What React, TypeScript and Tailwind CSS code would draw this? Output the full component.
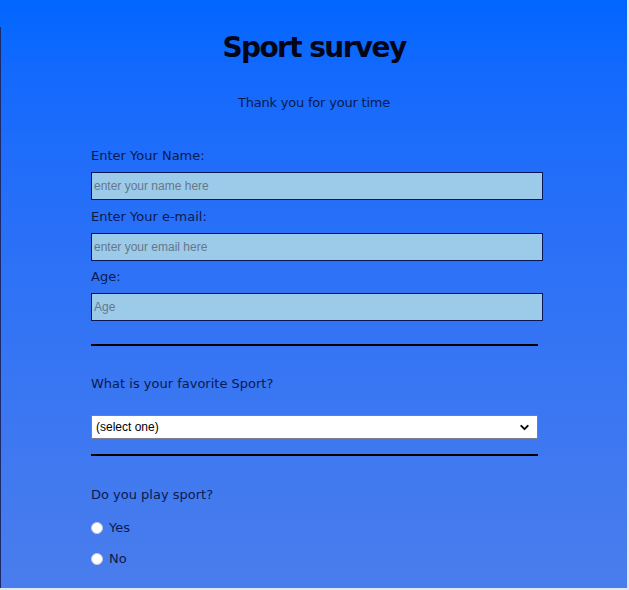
import { ChevronDown } from "lucide-react";

// One labelled text field of the survey form
function Field({ label, placeholder, mt }: { label: string; placeholder: string; mt: string }) {
  return (
    <>
      <p className={`${mt} h-5 pt-px leading-5`}>{label}</p>
      <input
        placeholder={placeholder}
        className="mt-[7px] h-[28px] w-[452px] border border-[#0b1656] bg-[#9ccbe9] px-[2px] font-['Liberation_Sans',Arial,sans-serif] text-[12px] text-black outline-none placeholder:text-[#66778a]"
      />
    </>
  );
}

export default function App() {
  return (
    <div className="flex min-h-[590px] w-[629px] bg-[#dfe8f8] font-['DejaVu_Sans',Tahoma,sans-serif] text-[13px] text-[#0c1a4e]">
      <div className="h-[588px] w-[627px] bg-gradient-to-b from-[#0066ff] to-[#4a7dec]">
        <div className="flex h-full">
          {/* thin dark edge on the left side */}
          <div className="mt-[27px] w-px bg-[#1b2a6b]" />
          <div className="flex-1">
            <h1 className="mt-[28px] h-[40px] text-center text-[28px] font-bold leading-[40px] tracking-[-1.6px] text-[#020617]">
              Sport survey
            </h1>
            <p className="mt-[24px] h-5 pt-px text-center leading-5 tracking-[-0.2px]">Thank you for your time</p>

            <form className="flex flex-col pl-[90px]">
              <Field label="Enter Your Name:" placeholder="enter your name here" mt="mt-[33px]" />
              <Field label="Enter Your e-mail:" placeholder="enter your email here" mt="mt-[6px]" />
              <Field label="Age:" placeholder="Age" mt="mt-[5px]" />

              <div className="mt-[23px] h-[2px] w-[447px] bg-black" />

              <p className="mt-[27px] h-5 pt-px leading-5">What is your favorite Sport?</p>
              <div className="mt-[22px] flex h-[24px] w-[447px] items-center justify-between border border-[#7a7f8c] bg-white pl-[4px] pr-[6px] font-['Liberation_Sans',Arial,sans-serif] text-[12px] text-black">
                <span>(select one)</span>
                <ChevronDown size={13} strokeWidth={3.5} className="text-black" />
              </div>

              <div className="mt-[15px] h-[2px] w-[447px] bg-black" />

              <p className="mt-[28px] h-5 pt-px leading-5">Do you play sport?</p>
              <label className="mt-[13px] flex h-5 items-center gap-[6px] pt-[2px]">
                <span className="h-[12px] w-[12px] rounded-full border border-[#c8cdd8] bg-white" />
                Yes
              </label>
              <label className="mt-[11px] flex h-5 items-center gap-[6px] pt-[2px]">
                <span className="h-[12px] w-[12px] rounded-full border border-[#c8cdd8] bg-white" />
                No
              </label>
            </form>
          </div>
        </div>
      </div>
    </div>
  );
}
